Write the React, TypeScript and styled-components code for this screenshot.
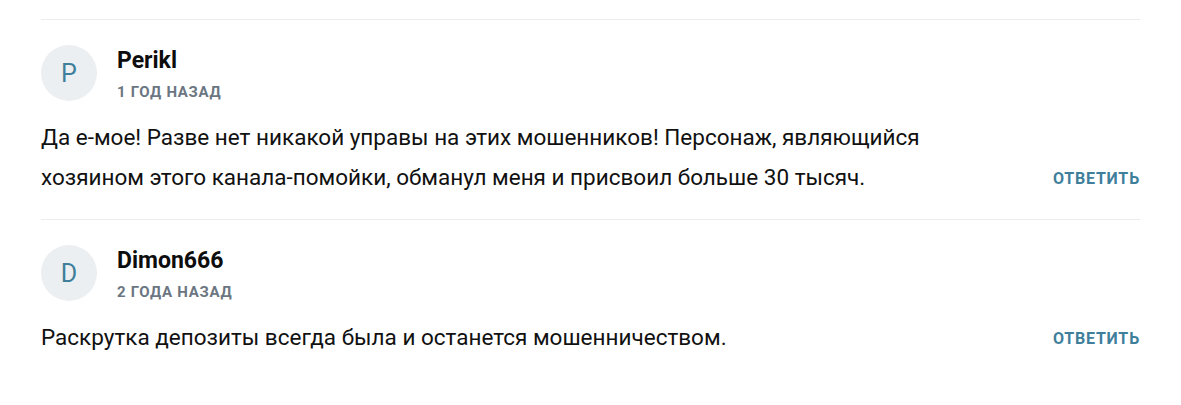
import React from "react";
import styled, { createGlobalStyle } from "styled-components";

const GlobalStyle = createGlobalStyle`
  html, body { margin: 0; padding: 0; background: #ffffff; }
  body { font-family: Roboto, "Noto Sans", Arial, sans-serif; color: #111111; }
`;

const List = styled.div`
  padding: 19px 41px 0;
`;

const Comment = styled.article`
  border-top: 1px solid #ececec;
  padding: 25px 0 22px;
`;

const Header = styled.div`
  display: flex;
  align-items: center;
  gap: 20px;
`;

const Avatar = styled.div`
  width: 56px;
  height: 56px;
  border-radius: 50%;
  background: #eceff2;
  color: #3f7f9b;
  display: flex;
  align-items: center;
  justify-content: center;
  font-size: 25px;
  font-weight: 400;
  flex-shrink: 0;
`;

const Meta = styled.div`
  display: flex;
  flex-direction: column;
  gap: 9px;
  padding-top: 2px;
`;

const Name = styled.div`
  font-size: 23px;
  font-weight: 700;
  line-height: 26px;
  color: #0d0d0d;
`;

const Date = styled.div`
  font-size: 15px;
  font-weight: 700;
  line-height: 18px;
  letter-spacing: 0.7px;
  text-transform: uppercase;
  color: #6b7682;
`;

const Body = styled.div`
  display: flex;
  align-items: flex-end;
  justify-content: space-between;
  gap: 40px;
  margin-top: 16px;
`;

const Text = styled.p`
  margin: 0;
  max-width: 930px;
  font-size: 22.5px;
  line-height: 40px;
  color: #111111;
`;

const Reply = styled.button`
  border: 0;
  background: none;
  padding: 0;
  margin-bottom: -2px;
  font-family: inherit;
  font-size: 16px;
  line-height: 40px;
  font-weight: 700;
  letter-spacing: 0.8px;
  text-transform: uppercase;
  color: #3f7f9b;
  cursor: pointer;
  flex-shrink: 0;
`;

const comments = [
  {
    name: "Perikl",
    date: "1 год назад",
    text: "Да е-мое! Разве нет никакой управы на этих мошенников! Персонаж, являющийся хозяином этого канала-помойки, обманул меня и присвоил больше 30 тысяч.",
  },
  {
    name: "Dimon666",
    date: "2 года назад",
    text: "Раскрутка депозиты всегда была и останется мошенничеством.",
  },
];

export default function App() {
  return (
    <>
      <GlobalStyle />
      <List>
        {comments.map((c) => (
          <Comment key={c.name}>
            <Header>
              <Avatar>{c.name[0]}</Avatar>
              <Meta>
                <Name>{c.name}</Name>
                <Date>{c.date}</Date>
              </Meta>
            </Header>
            <Body>
              <Text>{c.text}</Text>
              <Reply>Ответить</Reply>
            </Body>
          </Comment>
        ))}
      </List>
    </>
  );
}
